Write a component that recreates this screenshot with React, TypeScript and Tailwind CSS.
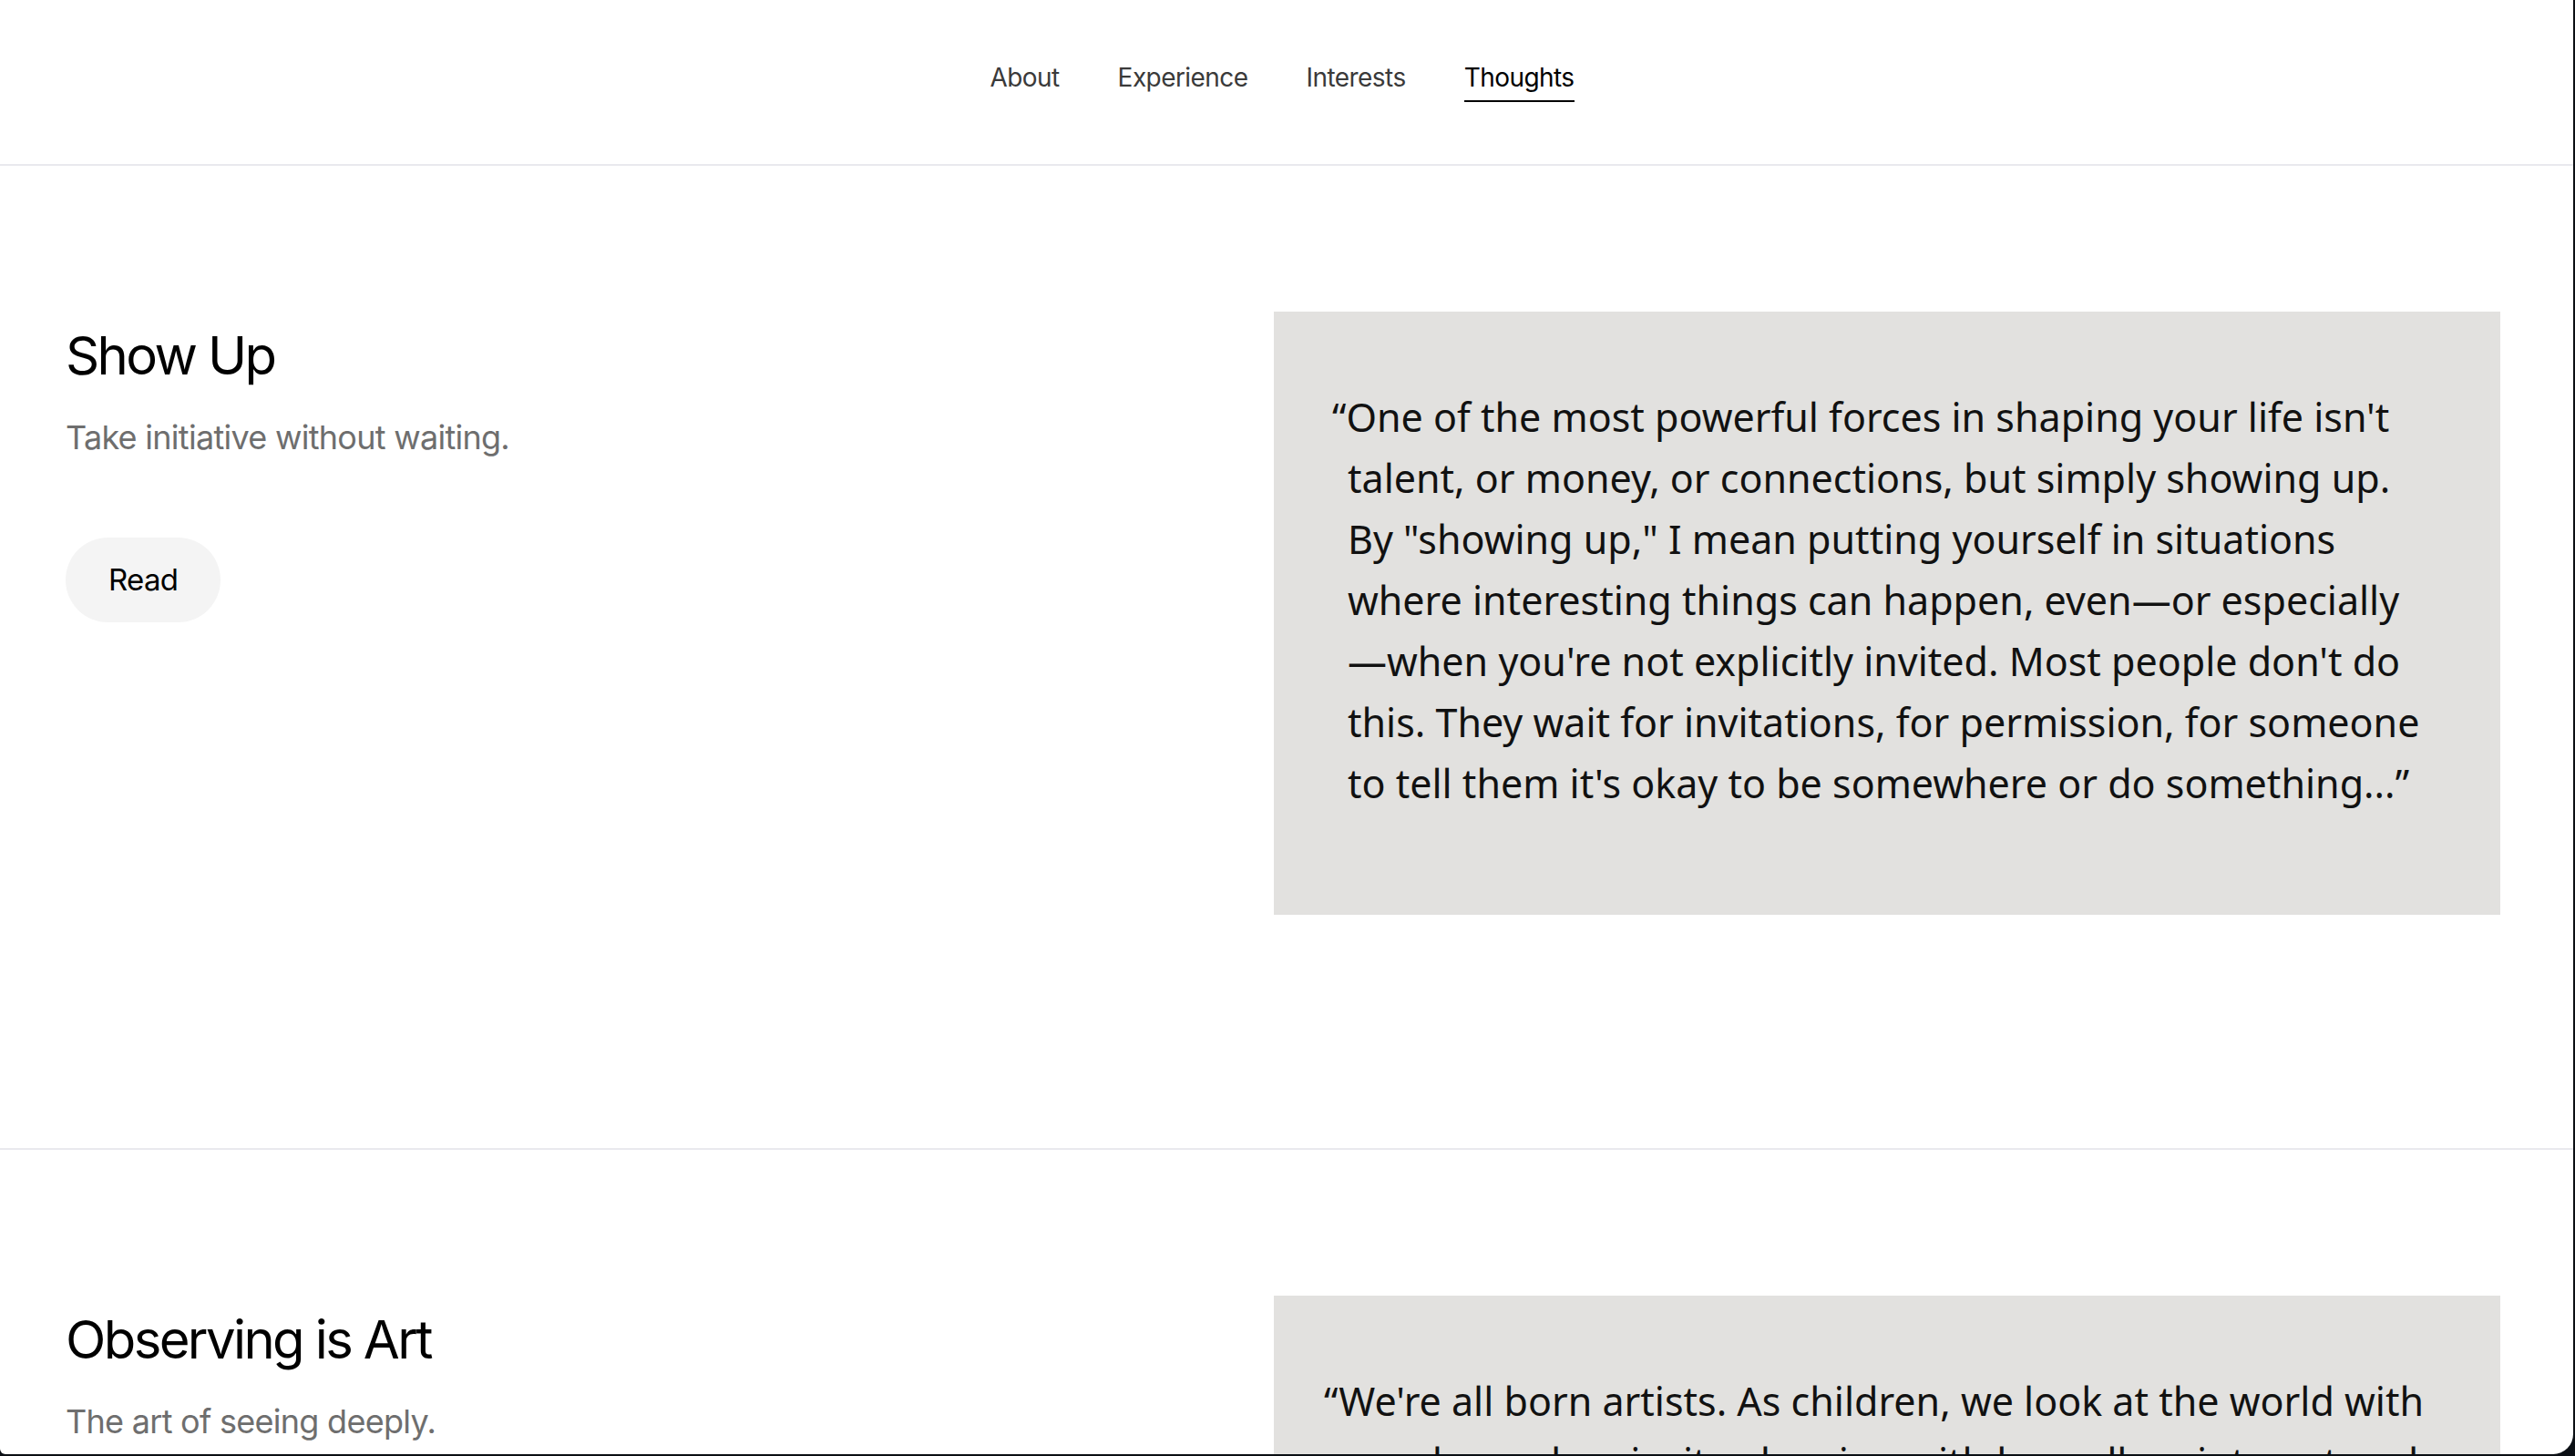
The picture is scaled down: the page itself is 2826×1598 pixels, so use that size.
const navItems = ['About', 'Experience', 'Interests', 'Thoughts'];

type Thought = {
  title: string;
  subtitle: string;
  quote: string;
  boxClass: string;
};

const thoughts: Thought[] = [
  {
    title: 'Show Up',
    subtitle: 'Take initiative without waiting.',
    quote:
      'One of the most powerful forces in shaping your life isn\'t talent, or money, or connections, but simply showing up. By "showing up," I mean putting yourself in situations where interesting things can happen, even\u2014or especially\u2014when you\'re not explicitly invited. Most people don\'t do this. They wait for invitations, for permission, for someone to tell them it\'s okay to be somewhere or do something...',
    boxClass: 'pl-[81px] pr-[76px]',
  },
  {
    title: 'Observing is Art',
    subtitle: 'The art of seeing deeply.',
    quote:
      "We're all born artists. As children, we look at the world with wonder and curiosity, drawing with boundless interest and joy. But somewhere along the way, most of us stop looking...",
    boxClass: 'pl-[72px] pr-[72px]',
  },
];

function Nav() {
  return (
    <nav className="h-[182px] pr-[10px] border-b-2 border-[#e9e9ee] flex items-center justify-center gap-16 font-['Inter',sans-serif] text-[28px] tracking-[-0.02em]">
      {navItems.map((item) => {
        const active = item === 'Thoughts';
        return (
          <a
            key={item}
            href="#"
            className={
              active
                ? 'pb-2 border-b-2 border-black text-black leading-[34px]'
                : 'pb-2 border-b-2 border-transparent text-[#3a3a3a] leading-[34px]'
            }
          >
            {item}
          </a>
        );
      })}
    </nav>
  );
}

function ThoughtSection(props: Thought) {
  return (
    <section className="flex pl-[72px] pr-[80px] pt-40 pb-64 border-b-2 border-[#e9e9ee]">
      <div className="flex-1 pt-[14px] font-['Inter',sans-serif]">
        <h2 className="text-[58px] leading-[1.2] tracking-[-0.045em] text-black">{props.title}</h2>
        <p className="mt-[29px] text-[36px] leading-[1.4] tracking-[-0.02em] text-[#6e6e6e]">
          {props.subtitle}
        </p>
        <button className="mt-[85px] h-[93px] px-[47px] rounded-full bg-[#f4f4f4] text-[33px] tracking-[-0.02em] text-black">
          Read
        </button>
      </div>
      <div className={'w-[1346px] shrink-0 bg-[#e2e1df] pt-[82px] pb-[111px] ' + props.boxClass}>
        <p className="font-['Noto_Sans',sans-serif] text-[43px] leading-[67px] text-[#111] indent-[-17px]">
          {'\u201C' + props.quote + '\u201D'}
        </p>
      </div>
    </section>
  );
}

export default function App() {
  return (
    <div className="h-screen overflow-hidden bg-[#0b0f14] pr-[2px] pb-[2px]">
      <div className="h-full overflow-hidden bg-white rounded-br-[22px] rounded-bl-[6px]">
        <Nav />
        {thoughts.map((t) => (
          <ThoughtSection key={t.title} {...t} />
        ))}
      </div>
    </div>
  );
}
